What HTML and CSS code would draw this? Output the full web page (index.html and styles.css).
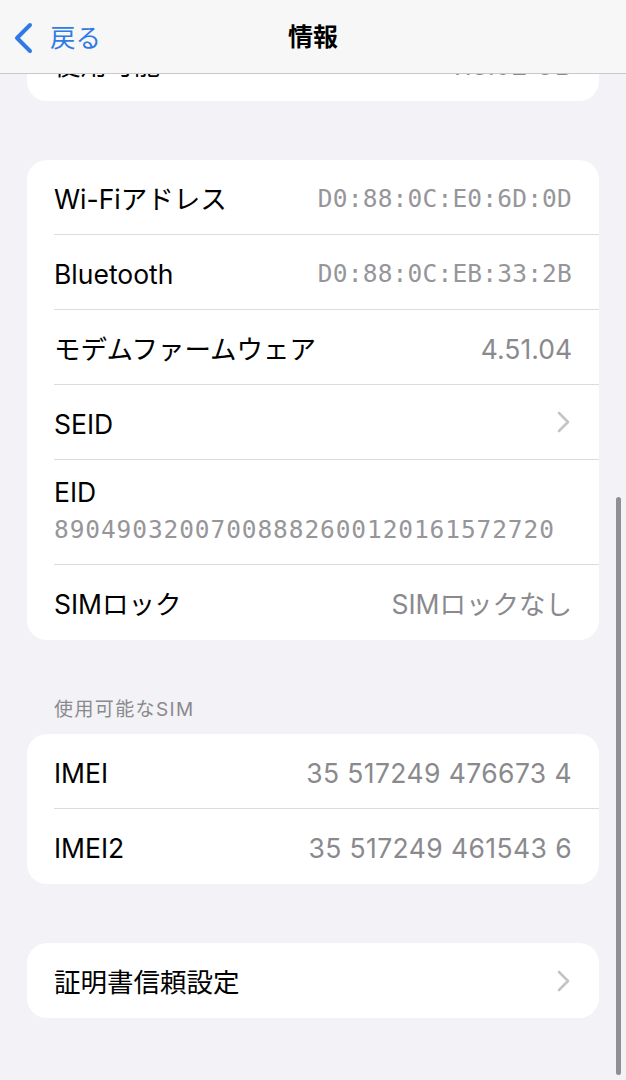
FILE: index.html
```html
<!DOCTYPE html>
<html lang="ja">
<head>
<meta charset="utf-8">
<title>情報</title>
<link rel="stylesheet" href="styles.css">
</head>
<body>
<div class="screen">
  <header class="nav">
    <div class="back">
      <svg class="back-chev" width="24" height="32" viewBox="0 0 24 32"><polyline points="18,3 5,16 18,29" fill="none" stroke="#2f7ae5" stroke-width="4" stroke-linecap="round" stroke-linejoin="round"/></svg>
      <span class="back-label">戻る</span>
    </div>
    <div class="title">情報</div>
  </header>

  <div class="viewport">
    <main class="content">
      <section class="card card-first">
        <div class="row"><span class="label">使用可能</span><span class="value">113.02 GB</span></div>
      </section>

      <section class="card">
        <div class="row"><span class="label">Wi-Fiアドレス</span><span class="value mono">D0:88:0C:E0:6D:0D</span></div>
        <div class="row"><span class="label">Bluetooth</span><span class="value mono">D0:88:0C:EB:33:2B</span></div>
        <div class="row"><span class="label">モデムファームウェア</span><span class="value">4.51.04</span></div>
        <div class="row"><span class="label">SEID</span>
          <svg class="chev" width="14" height="22" viewBox="0 0 14 22"><polyline points="2,2 11,11 2,20" fill="none" stroke="#c4c4c7" stroke-width="2.6" stroke-linecap="round" stroke-linejoin="round"/></svg>
        </div>
        <div class="row row-stack"><span class="label">EID</span><span class="value mono eid">89049032007008882600120161572720</span></div>
        <div class="row"><span class="label">SIMロック</span><span class="value">SIMロックなし</span></div>
      </section>

      <div class="section-header">使用可能なSIM</div>
      <section class="card">
        <div class="row"><span class="label">IMEI</span><span class="value num">35 517249 476673 4</span></div>
        <div class="row"><span class="label">IMEI2</span><span class="value num">35 517249 461543 6</span></div>
      </section>

      <section class="card card-last">
        <div class="row"><span class="label">証明書信頼設定</span>
          <svg class="chev" width="14" height="22" viewBox="0 0 14 22"><polyline points="2,2 11,11 2,20" fill="none" stroke="#c4c4c7" stroke-width="2.6" stroke-linecap="round" stroke-linejoin="round"/></svg>
        </div>
      </section>
    </main>
  </div>

  <div class="scrollbar"></div>
</div>
</body>
</html>
```

FILE: styles.css
```css
* { box-sizing: border-box; }
html, body {
  margin: 0;
  padding: 0;
  background: #f2f2f7;
}
body {
  font-family: "Inter", "Noto Sans CJK JP", sans-serif;
  color: #000;
}
.screen {
  position: relative;
  width: 626px;
  height: 1080px;
  overflow: hidden;
  background: #f2f2f7;
  display: flex;
  flex-direction: column;
}
.nav {
  flex: 0 0 74px;
  height: 74px;
  background: #f7f7f7;
  border-bottom: 1px solid #c9c9cc;
  display: flex;
  align-items: center;
  justify-content: center;
  position: relative;
}
.back {
  position: absolute;
  left: 12px;
  top: 22px;
  display: flex;
  align-items: center;
  gap: 14px;
}
.back-chev { display: block; }
.back-label {
  color: #2f7ae5;
  font-size: 25.5px;
  line-height: 30px;
}
.title {
  font-size: 25px;
  font-weight: 700;
  line-height: 30px;
  margin-top: 1px;
}
.viewport {
  flex: 1;
  overflow: hidden;
}
.content {
  margin-top: -48px;
  padding: 0 27px;
  display: flex;
  flex-direction: column;
}
.card {
  background: #fff;
  border-radius: 20px;
  overflow: hidden;
  margin-bottom: 59px;
}
.card-last { margin-bottom: 0; }
.row {
  height: 75px;
  margin-left: 27px;
  padding-right: 27px;
  padding-top: 3px;
  display: flex;
  align-items: center;
  justify-content: space-between;
  border-bottom: 1px solid #dcdce0;
}
.row:last-child { border-bottom: none; }
.label {
  font-size: 26.5px;
  line-height: 30px;
}
.value {
  font-size: 26.5px;
  line-height: 30px;
  color: #8a8a8e;
}
.num {
  letter-spacing: 0.4px;
}
.mono {
  font-family: "DejaVu Sans Mono", "Liberation Mono", monospace;
  font-size: 24.5px;
  letter-spacing: 0.2px;
  color: #96969a;
}
.row-stack {
  height: 105px;
  flex-direction: column;
  align-items: flex-start;
  justify-content: flex-start;
  padding-top: 17px;
  gap: 8px;
}
.eid {
  letter-spacing: 0.9px;
}
.chev {
  display: block;
  margin-right: 1px;
  margin-top: -3px;
}
.section-header {
  margin-top: -59px;
  padding: 58px 0 12px 27px;
  font-size: 19px;
  line-height: 24px;
  letter-spacing: 1.4px;
  color: #8a8a8e;
}
.scrollbar {
  position: absolute;
  left: 616px;
  top: 497px;
  width: 5px;
  height: 578px;
  border-radius: 3px;
  background: #8f8f94;
}
```
